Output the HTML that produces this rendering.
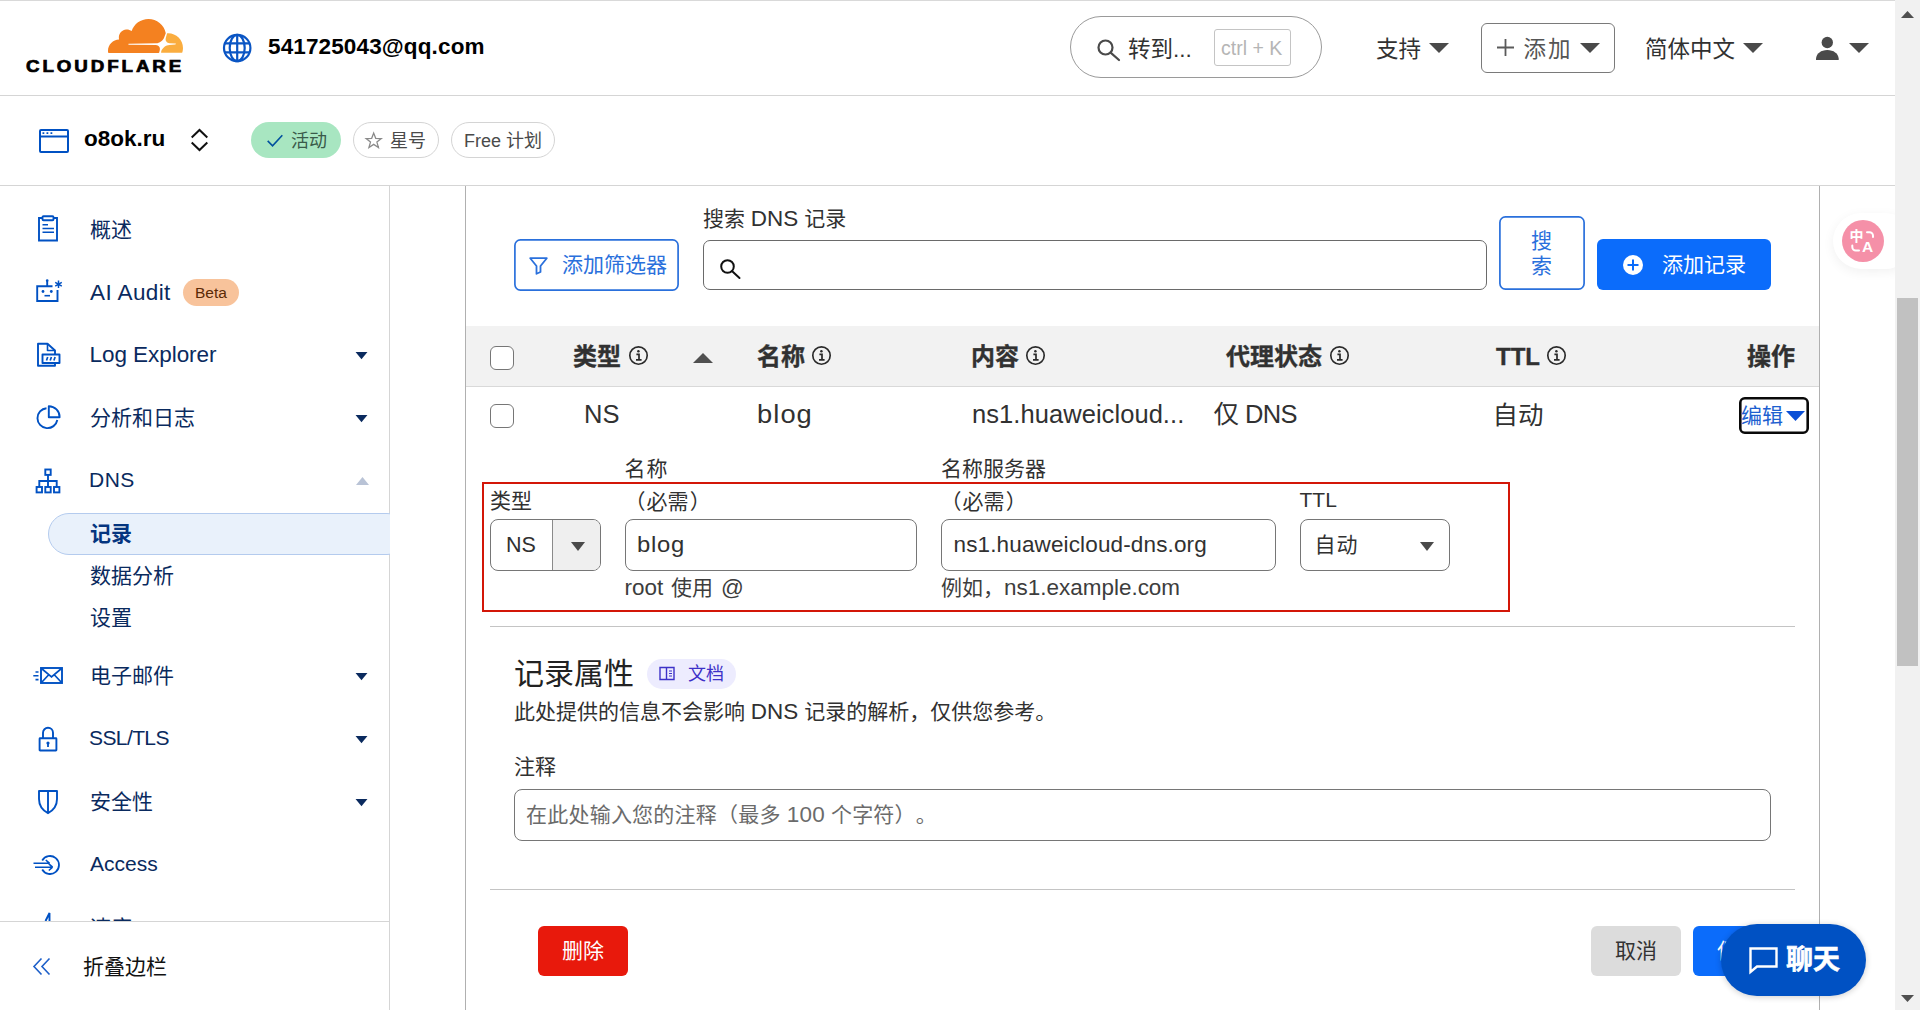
<!DOCTYPE html>
<html lang="zh-CN">
<head>
<meta charset="utf-8">
<title>o8ok.ru | DNS | Cloudflare</title>
<style>
*{box-sizing:border-box;margin:0;padding:0}
html,body{width:1920px;height:1010px;overflow:hidden;background:#fff}
body{position:relative;text-spacing-trim:space-all;font-family:"Liberation Sans","Noto Sans CJK SC",sans-serif;color:#313131;font-size:21px}
.a{position:absolute;white-space:nowrap}
.t{position:absolute;white-space:nowrap;line-height:30px;height:30px}
.b{font-weight:bold}
svg{position:absolute;overflow:visible}
/* header */
#topline{left:0;top:0;width:1895px;height:1px;background:#d9d9d9}
#hdrline{left:0;top:95px;width:1895px;height:1px;background:#d5d5d5}
#zoneline{left:0;top:185px;width:1895px;height:1px;background:#d5d5d5}
#sideline{left:389px;top:186px;width:1px;height:824px;background:#d5d5d5}
#footline{left:0;top:921px;width:389px;height:1px;background:#d5d5d5}
#cardL{left:465px;top:186px;width:1px;height:824px;background:#b0b0b0}
#cardR{left:1819px;top:186px;width:1px;height:824px;background:#b0b0b0}
/* scrollbar */
#sb{left:1895px;top:0;width:25px;height:1010px;background:#f1f1f1}
#sbthumb{left:1897px;top:298px;width:21px;height:368px;background:#c1c1c1}
.nav{color:#0a2a5e;font-size:21px}
.sub{color:#0a2a5e;font-size:21px}
.sub.b{color:#04357f}
.pill{position:absolute;border-radius:18px;height:36px;top:122px}
.inp{position:absolute;border:1px solid #767676;border-radius:8px;background:#fff}
.L{font-size:1.07em}
.row{font-size:25.500px;color:#313131}
.hd{font-weight:bold;font-size:24px;color:#313131;-webkit-text-stroke:0.350px #313131}
</style>
</head>
<body>
<!-- HEADER -->
<div class="a" id="topline"></div>
<div class="a" id="hdrline"></div>
<div class="a" id="zoneline"></div>
<div class="a" id="sideline"></div>
<div class="a" id="cardL"></div>
<div class="a" id="cardR"></div>
<svg style="left:108px;top:18.500px" width="75" height="34" viewBox="54.9 3.6 48.2 21.8" preserveAspectRatio="none">
<path fill="#f48120" d="M88.1 24c.3-1 .2-2-.3-2.600-.5-.600-1.200-1-2.100-1.100l-17.400-.2c-.1 0-.2-.1-.3-.1-.1-.1-.1-.2 0-.3.1-.2.200-.3.400-.3l17.500-.2c2.100-.1 4.300-1.800 5.100-3.800l1-2.600c0-.1.100-.2 0-.3-1.100-5.100-5.700-8.900-11.100-8.900-5 0-9.300 3.200-10.800 7.700-1-.7-2.200-1.100-3.600-1-2.400.2-4.300 2.200-4.600 4.600-.1.600 0 1.200.1 1.800-3.900.1-7.100 3.300-7.100 7.300 0 .4 0 .7.100 1.100 0 .2.200.3.300.3h32.100c.2 0 .4-.1.400-.3l.3-1.100z"/>
<path fill="#faad3f" d="M93.600 12.800h-.5c-.1 0-.2.100-.3.200l-.7 2.400c-.3 1-.2 2 .3 2.600.5.600 1.200 1 2.100 1.100l3.700.2c.1 0 .2.100.3.100.1.100.1.200 0 .3-.1.200-.2.300-.4.300l-3.800.2c-2.100.1-4.300 1.800-5.100 3.800l-.2.900c-.1.100 0 .3.200.3h13.200c.2 0 .3-.1.300-.3.200-.8.400-1.700.4-2.600 0-5.200-4.300-9.500-9.500-9.500"/>
</svg>
<div class="t b" id="wordmark" style="left:25.500px;top:51.500px;font-size:16px;color:#000;letter-spacing:2.500px;transform-origin:0 50%;transform:scaleX(1.17);-webkit-text-stroke:0.700px #000">CLOUDFLARE</div>

<svg style="left:222px;top:33.300px" width="30" height="30" viewBox="0 0 30 30" fill="none" stroke="#0a55c4" stroke-width="2.200">
<circle cx="15.200" cy="15" r="13.200"/><ellipse cx="15.200" cy="15" rx="7.500" ry="13.200"/><path d="M15.200 1.600V28.400M2.800 10.400H27.600M2.800 19.400H27.600"/></svg>
<div class="t b" id="email" style="left:268px;top:32px;font-size:22.500px;color:#000;letter-spacing:0.130px">541725043@qq.com</div>
<div class="a" id="gopill" style="left:1070px;top:16px;width:252px;height:62px;border:1px solid #9a9a9a;border-radius:31px"></div>
<svg style="left:1097px;top:39px" width="24" height="22" viewBox="0 0 24 22" fill="none" stroke="#4a4a4a" stroke-width="2.200" stroke-linecap="round"><circle cx="8.500" cy="8.500" r="7"/><path d="M13.600 13.600L22 21"/></svg>
<div class="t" id="goto" style="left:1128px;top:34.500px;font-size:22.500px;color:#313131">转到...</div>
<div class="a" id="kbd" style="left:1214px;top:29px;width:77px;height:37px;border:1px solid #c4c4c4;border-radius:3px"></div>
<div class="t" id="kbdt" style="left:1221px;top:33px;font-size:19.500px;color:#b5b5b5">ctrl + K</div>
<div class="t" id="support" style="left:1376px;top:34.500px;font-size:22.500px;color:#313131">支持</div>
<svg class="car" style="left:1429px;top:43px" width="20" height="10" viewBox="0 0 20 10"><path d="M0 0H20L10 10Z" fill="#4a4a4a"/></svg>
<div class="a" id="addbtn" style="left:1481px;top:23px;width:134px;height:50px;border:1px solid #7a7a7a;border-radius:6px"></div>
<svg style="left:1497px;top:39px" width="17" height="17" viewBox="0 0 17 17" stroke="#5a5a5a" stroke-width="1.800"><path d="M8.500 0V17M0 8.500H17"/></svg>
<div class="t" id="addt" style="left:1523.500px;top:34.500px;font-size:22.500px;color:#555;letter-spacing:2px">添加</div>
<svg class="car" style="left:1580px;top:43px" width="20" height="10" viewBox="0 0 20 10"><path d="M0 0H20L10 10Z" fill="#4a4a4a"/></svg>
<div class="t" id="lang" style="left:1645px;top:34.500px;font-size:22.500px;color:#313131">简体中文</div>
<svg class="car" style="left:1743px;top:43px" width="20" height="10" viewBox="0 0 20 10"><path d="M0 0H20L10 10Z" fill="#4a4a4a"/></svg>
<svg style="left:1815px;top:36px" width="24" height="24" viewBox="0 0 24 24" fill="#4a4a4a"><circle cx="12.300" cy="6.500" r="5.700"/><path d="M1 24V22.500C1.500 17.500 6 14 12.300 14S23.200 17.500 23.700 22.500V24Z"/></svg>
<svg class="car" style="left:1849px;top:43px" width="20" height="10" viewBox="0 0 20 10"><path d="M0 0H20L10 10Z" fill="#4a4a4a"/></svg>

<svg style="left:39px;top:129px" width="30" height="24" viewBox="0 0 30 24" fill="none" stroke="#0051c3" stroke-width="2"><rect x="1" y="1" width="28" height="22" rx="1"/><path d="M1 7.500H29"/><path d="M3.500 4.200H5.300M7.500 4.200H9.300M11.500 4.200H13.300" stroke-width="1.800"/></svg>
<div class="t b" id="zone" style="left:84px;top:124px;font-size:22.500px;color:#000">o8ok.ru</div>
<svg style="left:191px;top:129px" width="17" height="22" viewBox="0 0 17 22" fill="none" stroke="#111" stroke-width="2"><path d="M0.700 8.500L8.500 1L16.300 8.500M0.700 13.500L8.500 21L16.300 13.500"/></svg>
<div class="pill" style="left:251px;width:90px;background:#a8e6c1"></div>
<svg style="left:266px;top:134px" width="18" height="13" viewBox="0 0 20 16" fill="none" stroke="#00509e" stroke-width="2"><path d="M1 8.500L7 14.500L19 1.500"/></svg>
<div class="t" id="act" style="left:291px;top:126px;font-size:18px;color:#3a5a4a">活动</div>
<div class="pill" style="left:353px;width:86px;border:1px solid #d4d4d4"></div>
<svg style="left:364.800px;top:132.300px" width="17.400" height="16.500" viewBox="0 0 19 18" fill="none" stroke="#8a8a8a" stroke-width="1.400" stroke-linejoin="miter"><path d="M9.500 1.200L11.700 6.900L17.800 7.200L13 11L14.700 16.900L9.500 13.500L4.300 16.900L6 11L1.200 7.200L7.300 6.900Z"/></svg>
<div class="t" id="star" style="left:390px;top:126px;font-size:18px;color:#4a4a4a">星号</div>
<div class="pill" style="left:451px;width:104px;border:1px solid #d4d4d4"></div>
<div class="t" id="free" style="left:464px;top:126px;font-size:18px;color:#4a4a4a">Free 计划</div>

<div class="a" id="selpill" style="left:48px;top:513px;width:360px;height:42px;border:1px solid #b4cbee;border-radius:21px;background:#e9f1fb;clip-path:inset(0 18px 0 0)"></div>
<!-- icons -->
<svg style="left:37px;top:215px" width="22" height="27" viewBox="0 0 22 27" fill="none" stroke="#0051c3" stroke-width="1.900"><path d="M5.500 3H2V25.500H20V3H16.500"/><rect x="5.500" y="1.200" width="11" height="4" rx="1"/><path d="M5.500 9.700H11M5.500 13.500H17M5.500 17.300H17" stroke-width="1.600"/></svg>
<svg style="left:35px;top:278px" width="30" height="25" viewBox="0 0 30 25" fill="none" stroke="#0051c3" stroke-width="1.900"><path d="M17.500 8.200H2.200V23H22.500V12"/><path d="M12.200 8.200V3"/><circle cx="12.200" cy="2.600" r="1.300" fill="#0051c3" stroke="none"/><circle cx="8" cy="13.500" r="1.400" fill="#0051c3" stroke="none"/><circle cx="16.300" cy="13.500" r="1.400" fill="#0051c3" stroke="none"/><path d="M9.500 17.700H15" stroke-width="1.600"/><path d="M23.500 2.500V10M20.200 4.400L26.800 8.100M26.800 4.400L20.200 8.100" stroke-width="1.500"/></svg>
<svg style="left:36px;top:342px" width="26" height="26" viewBox="0 0 26 26" fill="none" stroke="#0051c3" stroke-width="1.900" stroke-linejoin="round"><path d="M19 12V8.500L11.500 1.800H2V23.700H19V21.500"/><path d="M11.500 1.800V8.500H19" stroke-width="1.600"/><rect x="6.500" y="12.500" width="17" height="8.500"/><path d="M10.500 18.500L11.700 15M14.200 18.500L15.400 15M17.900 18.500L19.100 15" stroke-width="1.700"/></svg>
<svg style="left:36px;top:405px" width="26" height="26" viewBox="0 0 26 26" fill="none" stroke="#0051c3" stroke-width="1.900"><path d="M10.500 3.200A10 10 0 1 0 21.300 15"/><path d="M12.800 1.200V12.200H23.600A10.800 10.800 0 0 0 12.800 1.200Z" stroke-linejoin="round"/></svg>
<svg style="left:35px;top:468px" width="26" height="26" viewBox="0 0 26 26" fill="none" stroke="#0051c3" stroke-width="1.900"><rect x="10.300" y="1.500" width="5.400" height="5.400"/><rect x="1.600" y="19" width="5.400" height="5.400"/><rect x="10.300" y="19" width="5.400" height="5.400"/><rect x="19" y="19" width="5.400" height="5.400"/><path d="M13 7V19M4.300 19V13H21.700V19"/></svg>
<svg style="left:32px;top:666px" width="32" height="19" viewBox="0 0 32 19" fill="none" stroke="#0051c3" stroke-width="1.900"><rect x="9" y="2" width="21" height="15"/><path d="M9.500 2.500L19.500 11L29.500 2.500M9.500 16.500L16.500 9M29.500 16.500L22.500 9" stroke-width="1.700"/><path d="M3.500 6H6.500M1.300 9.800H6.500M3.500 13.600H6.500" stroke-width="1.600"/></svg>
<svg style="left:38px;top:726px" width="20" height="26" viewBox="0 0 20 26" fill="none" stroke="#0051c3" stroke-width="1.900"><rect x="1.600" y="12.300" width="16.800" height="12.200" rx="0.500"/><path d="M5 12.300V6.800A5 5 0 0 1 15 6.800V12.300"/><circle cx="10" cy="17" r="1.600" fill="#0051c3" stroke="none"/><path d="M10 17V21" stroke-width="1.800"/></svg>
<svg style="left:37px;top:789px" width="22" height="26" viewBox="0 0 22 26" fill="none" stroke="#0051c3" stroke-width="1.900" stroke-linejoin="round"><path d="M2 2H20V10C20 17 16 21.500 11 24.200C6 21.500 2 17 2 10Z"/><path d="M11 2V24"/></svg>
<svg style="left:32px;top:854px" width="30" height="22" viewBox="0 0 30 22" fill="none" stroke="#0051c3" stroke-width="1.800"><path d="M10.200 6.500A9 9 0 1 1 10.200 15.500"/><path d="M1.500 9.300H17.500M13.800 6L17.600 9.300M3 13.200H20.500M16.800 16.500L20.600 13.200M16.800 9.900L20.600 13.200" stroke-width="1.600"/></svg>
<svg style="left:44px;top:912px" width="10" height="9" viewBox="0 0 10 9" fill="none" stroke="#0051c3" stroke-width="1.900"><path d="M1.500 9L5.500 1V9"/></svg>
<!-- labels -->
<div class="t nav" id="n1" style="left:90px;top:215px">概述</div>
<div class="t nav" id="n2" style="left:90px;top:277.500px;font-size:22.500px;letter-spacing:0.400px">AI Audit</div>
<div class="a" style="left:183px;top:279px;width:56px;height:27px;border-radius:14px;background:#f8c39b"></div>
<div class="t" id="beta" style="left:195px;top:278px;font-size:15.500px;color:#5b2a06">Beta</div>
<div class="t nav" id="n3" style="left:89.500px;top:340px;font-size:22.500px;letter-spacing:-0.050px">Log Explorer</div>
<div class="t nav" id="n4" style="left:90px;top:403px">分析和日志</div>
<div class="t nav" id="n5" style="left:89px;top:465px;font-size:21px;letter-spacing:0.500px">DNS</div>
<div class="t sub b" id="s1" style="left:90px;top:519px">记录</div>
<div class="t sub" id="s2" style="left:90px;top:561px">数据分析</div>
<div class="t sub" id="s3" style="left:90px;top:603px">设置</div>
<div class="t nav" id="n6" style="left:90px;top:661px">电子邮件</div>
<div class="t nav" id="n7" style="left:89px;top:723px;letter-spacing:-0.600px">SSL/TLS</div>
<div class="t nav" id="n8" style="left:90px;top:787px">安全性</div>
<div class="t nav" id="n9" style="left:90px;top:849px">Access</div>
<div class="a" style="left:0;top:900px;width:389px;height:21px;overflow:hidden"><div class="t nav" id="n10" style="left:90px;top:13px">速度</div></div>
<svg style="left:355.300px;top:352px" width="13" height="7.300" viewBox="0 0 13 8"><path d="M0 0H13L6.500 8Z" fill="#0a2a5e"/></svg>
<svg style="left:355.300px;top:415px" width="13" height="7.300" viewBox="0 0 13 8"><path d="M0 0H13L6.500 8Z" fill="#0a2a5e"/></svg>
<svg style="left:356px;top:477px" width="13" height="8" viewBox="0 0 13 8"><path d="M0 8H13L6.500 0Z" fill="#b9c3d6"/></svg>
<svg style="left:355.300px;top:673px" width="13" height="7.300" viewBox="0 0 13 8"><path d="M0 0H13L6.500 8Z" fill="#0a2a5e"/></svg>
<svg style="left:355.300px;top:736px" width="13" height="7.300" viewBox="0 0 13 8"><path d="M0 0H13L6.500 8Z" fill="#0a2a5e"/></svg>
<svg style="left:355.300px;top:799px" width="13" height="7.300" viewBox="0 0 13 8"><path d="M0 0H13L6.500 8Z" fill="#0a2a5e"/></svg>
<div class="a" id="footline"></div>
<svg style="left:33px;top:958px" width="17" height="17" viewBox="0 0 17 17" fill="none" stroke="#1d5fc9" stroke-width="1.600"><path d="M8.500 0.500L1 8.500L8.500 16.500M16.500 0.500L9 8.500L16.500 16.500"/></svg>
<div class="t" id="fold" style="left:83px;top:952px;color:#111">折叠边栏</div>

<!-- toolbar -->
<svg style="left:514px;top:239px" width="165" height="52"><rect x="0.900" y="0.900" width="163.200" height="50.200" rx="5.500" fill="#fff" stroke="#2a70dc" stroke-width="1.700"/></svg>
<svg style="left:529px;top:257px" width="19" height="18" viewBox="0 0 19 18" fill="none" stroke="#2a70dc" stroke-width="1.800" stroke-linejoin="round"><path d="M1.200 1.200H17.800L11.500 9V15L7.500 16.800V9Z"/></svg>
<div class="t" id="flt" style="left:562px;top:250px;color:#2a70dc">添加筛选器</div>
<div class="t" id="slab" style="left:703px;top:204px">搜索 <span class="L">DNS</span> 记录</div>
<div class="inp" style="left:703px;top:240px;width:784px;height:50px;border-radius:7px;border-color:#6a6a6a"></div>
<svg style="left:720px;top:259px" width="21" height="20" viewBox="0 0 21 20" fill="none" stroke="#111" stroke-width="2" stroke-linecap="round"><circle cx="7.500" cy="7.500" r="6.300"/><path d="M12.200 12.200L19.500 19"/></svg>
<svg style="left:1499px;top:216px" width="86" height="74"><rect x="0.900" y="0.900" width="84.200" height="72.200" rx="5.500" fill="#fff" stroke="#2a70dc" stroke-width="1.700"/></svg>
<div class="t" id="sbtn1" style="left:1531px;top:226px;color:#2a70dc">搜</div>
<div class="t" id="sbtn2" style="left:1531px;top:251px;color:#2a70dc">索</div>
<div class="a" style="left:1597px;top:239px;width:174px;height:51px;border-radius:6px;background:#0b6cfb"></div>
<svg style="left:1623px;top:255px" width="20" height="20" viewBox="0 0 20 20"><circle cx="10" cy="10" r="10" fill="#fff"/><path d="M10 4.500V15.500M4.500 10H15.500" stroke="#0b6cfb" stroke-width="2"/></svg>
<div class="t" id="addrec" style="left:1662px;top:250px;color:#fff">添加记录</div>
<!-- table header -->
<div class="a" style="left:466px;top:326px;width:1353px;height:60px;background:#f2f2f2"></div>
<div class="a" style="left:466px;top:386px;width:1353px;height:1px;background:#d9d9d9"></div>
<div class="a" style="left:490px;top:346px;width:24px;height:24px;border:1px solid #767676;border-radius:6px;background:#fff"></div>
<div class="t hd" id="h1" style="left:573px;top:342px">类型</div><svg style="left:628.7px;top:346.300px" width="19" height="19" viewBox="0 0 19 19" fill="none" stroke="#2a2a2a" stroke-width="1.650"><circle cx="9.500" cy="9.500" r="8.700"/><path d="M7.400 8.300H10V13.600M7 13.800H12.600" stroke-width="1.700"/><circle cx="9.400" cy="5.200" r="1.250" fill="#2a2a2a" stroke="none"/></svg>
<svg style="left:693px;top:353px" width="20" height="10" viewBox="0 0 20 10"><path d="M0 10H20L10 0Z" fill="#505050"/></svg>
<div class="t hd" id="h2" style="left:757px;top:342px">名称</div><svg style="left:812.2px;top:346.300px" width="19" height="19" viewBox="0 0 19 19" fill="none" stroke="#2a2a2a" stroke-width="1.650"><circle cx="9.500" cy="9.500" r="8.700"/><path d="M7.400 8.300H10V13.600M7 13.800H12.600" stroke-width="1.700"/><circle cx="9.400" cy="5.200" r="1.250" fill="#2a2a2a" stroke="none"/></svg>
<div class="t hd" id="h3" style="left:971px;top:342px">内容</div><svg style="left:1026.2px;top:346.300px" width="19" height="19" viewBox="0 0 19 19" fill="none" stroke="#2a2a2a" stroke-width="1.650"><circle cx="9.500" cy="9.500" r="8.700"/><path d="M7.400 8.300H10V13.600M7 13.800H12.600" stroke-width="1.700"/><circle cx="9.400" cy="5.200" r="1.250" fill="#2a2a2a" stroke="none"/></svg>
<div class="t hd" id="h4" style="left:1226px;top:342px">代理状态</div><svg style="left:1329.7px;top:346.300px" width="19" height="19" viewBox="0 0 19 19" fill="none" stroke="#2a2a2a" stroke-width="1.650"><circle cx="9.500" cy="9.500" r="8.700"/><path d="M7.400 8.300H10V13.600M7 13.800H12.600" stroke-width="1.700"/><circle cx="9.400" cy="5.200" r="1.250" fill="#2a2a2a" stroke="none"/></svg>
<div class="t hd" id="h5" style="left:1496px;top:342px">TTL</div><svg style="left:1546.7px;top:346.300px" width="19" height="19" viewBox="0 0 19 19" fill="none" stroke="#2a2a2a" stroke-width="1.650"><circle cx="9.500" cy="9.500" r="8.700"/><path d="M7.400 8.300H10V13.600M7 13.800H12.600" stroke-width="1.700"/><circle cx="9.400" cy="5.200" r="1.250" fill="#2a2a2a" stroke="none"/></svg>
<div class="t hd" id="h6" style="left:1747px;top:342px">操作</div>
<!-- row -->
<div class="a" style="left:490px;top:404px;width:24px;height:24px;border:1px solid #767676;border-radius:6px;background:#fff"></div>
<div class="t row" id="r1" style="left:584px;top:399px">NS</div>
<div class="t row" id="r2" style="left:757px;top:399px;letter-spacing:1px;transform:scaleX(1.07);transform-origin:0 50%">blog</div>
<div class="t row" id="r3" style="left:972px;top:399px;letter-spacing:0.060px">ns1.huaweicloud...</div>
<div class="t row" id="r4" style="left:1213.500px;top:399px;letter-spacing:-0.600px">仅 <span>DNS</span></div>
<div class="t row" id="r5" style="left:1492.500px;top:399.500px">自动</div>
<svg style="left:1739px;top:397px" width="70" height="37"><rect x="1.300" y="1.300" width="67.400" height="34.400" rx="4.500" fill="none" stroke="#0a0a0a" stroke-width="2.600"/></svg>
<div class="t" id="edit" style="left:1741px;top:401px;color:#1d5fd0;font-size:21px">编辑</div>
<svg style="left:1785.500px;top:411px" width="19" height="10" viewBox="0 0 19 10"><path d="M0 0H19L9.500 10Z" fill="#0a4fd6"/></svg>
<!-- form -->
<div class="t" id="f1" style="left:624.500px;top:454px;letter-spacing:1px">名称</div>
<div class="t" id="f2" style="left:941px;top:454px">名称服务器</div>
<div class="a" style="left:482px;top:482px;width:1028px;height:130px;border:2px solid #d31608"></div>
<div class="t" id="f3" style="left:490px;top:486px">类型</div>
<div class="t" id="f4" style="left:624.500px;top:487px">（<span style="margin:0 1.300px 0 1px">必需</span>）</div>
<div class="t" id="f5" style="left:940.500px;top:487px">（<span style="margin:0 1.300px 0 1px">必需</span>）</div>
<div class="t" id="f6" style="left:1299.500px;top:485px">TTL</div>
<div class="inp" style="left:490px;top:519px;width:111px;height:52px;overflow:hidden"><div style="position:absolute;left:61px;top:0;width:49px;height:50px;background:#efefef;border-left:1px solid #8a8a8a"></div></div>
<div class="t" id="v1" style="left:506px;top:530px;font-size:21.500px">NS</div>
<svg style="left:571px;top:542px" width="14" height="9" viewBox="0 0 14 9"><path d="M0 0H14L7 9Z" fill="#4a4a4a"/></svg>
<div class="inp" style="left:625px;top:519px;width:292px;height:52px"></div>
<div class="t" id="v2" style="left:637px;top:530px;font-size:22.500px;letter-spacing:0.700px;transform:scaleX(1.06);transform-origin:0 50%">blog</div>
<div class="inp" style="left:941px;top:519px;width:335px;height:52px"></div>
<div class="t" id="v3" style="left:953.500px;top:530px;font-size:22.500px;letter-spacing:0.140px">ns1.huaweicloud-dns.org</div>
<div class="inp" style="left:1300px;top:519px;width:150px;height:52px"></div>
<div class="t" id="v4" style="left:1314.500px;top:530px;letter-spacing:1px">自动</div>
<svg style="left:1420px;top:542px" width="14" height="9" viewBox="0 0 14 9"><path d="M0 0H14L7 9Z" fill="#4a4a4a"/></svg>
<div class="t" id="f7" style="left:624.500px;top:573px;color:#3d3d3d;word-spacing:2px"><span class="L">root</span> 使用 <span class="L">@</span></div>
<div class="t" id="f8" style="left:941px;top:573px;color:#3d3d3d">例如，<span class="L">ns1.example.com</span></div>
<div class="a" style="left:490px;top:626px;width:1305px;height:1px;background:#c4c4c4"></div>
<!-- attrs -->
<div class="t" id="a1" style="left:514px;top:654px;font-size:30px;line-height:40px;height:40px;color:#222">记录属性</div>
<div class="a" style="left:647px;top:659px;width:89px;height:30px;border-radius:15px;background:#edecfe"></div>
<svg style="left:659px;top:666px" width="16" height="15" viewBox="0 0 16 15" fill="none" stroke="#3d31c8" stroke-width="1.400"><path d="M1 1.500H7.500V13.500H1ZM7.500 1.500H15V13.500H7.500"/><path d="M10 5H13M10 7.500H13M10 10H13" stroke-width="1.100"/></svg>
<div class="t" id="a2" style="left:688px;top:659px;font-size:18px;color:#3d31c8">文档</div>
<div class="t" id="a3" style="left:514px;top:697px">此处提供的信息不会影响 <span class="L">DNS</span> 记录的解析，仅供您参考。</div>
<div class="t" id="a4" style="left:514px;top:752px">注释</div>
<div class="inp" style="left:514px;top:789px;width:1257px;height:52px"></div>
<div class="t" id="a5" style="left:526px;top:800px;color:#6b6b6b;letter-spacing:0.220px">在此处输入您的注释（最多 <span class="L">100</span> 个字符）。</div>
<div class="a" style="left:490px;top:889px;width:1305px;height:1px;background:#c4c4c4"></div>
<div class="a" style="left:538px;top:926px;width:90px;height:50px;border-radius:6px;background:#e8190c"></div>
<div class="t" id="del" style="left:562px;top:936px;color:#fff">删除</div>
<div class="a" style="left:1591px;top:926px;width:90px;height:50px;border-radius:6px;background:#dcdcdc"></div>
<div class="t" id="cancel" style="left:1615px;top:936px;color:#333">取消</div>
<div class="a" style="left:1693px;top:926px;width:90px;height:50px;border-radius:6px;background:#0b6cfb"></div>
<div class="t" id="save" style="left:1717px;top:936px;color:#fff">保存</div>

<div class="a" style="left:1833px;top:213px;width:80px;height:56px;border-radius:28px;background:#fff;box-shadow:0 3px 12px rgba(0,0,0,0.06);clip-path:inset(-20px 18px -20px -20px)"></div>
<div class="a" style="left:1841.500px;top:220px;width:42px;height:42px;border-radius:50%;background:#f590a8"></div>
<div class="t b" id="tr1" style="left:1849.500px;top:226px;font-size:14px;line-height:20px;height:20px;color:#fff">中</div>
<div class="t b" id="tr2" style="left:1862px;top:236.500px;font-size:15.500px;line-height:20px;height:20px;color:#fff">A</div>
<svg style="left:1841px;top:220px" width="43" height="43" viewBox="0 0 43 43" fill="none" stroke="#fff" stroke-width="2" stroke-linecap="round"><path d="M26 12.200H28.500A3.500 3.500 0 0 1 32 15.700V17"/><path d="M11.300 25.500V27A3.500 3.500 0 0 0 14.800 30.500H18"/></svg>
<div class="a" style="left:1721px;top:924px;width:145px;height:72px;border-radius:36px;background:#0051c3;box-shadow:0 1px 6px rgba(0,0,0,0.2)"></div>
<svg style="left:1749px;top:947px" width="29" height="27" viewBox="0 0 29 27" fill="none" stroke="#fff" stroke-width="2.400" stroke-linejoin="miter"><path d="M1.500 1.500H27.500V19.500H8L1.500 25Z"/></svg>
<div class="t b" id="chat" style="left:1786px;top:942px;font-size:27px;line-height:36px;height:36px;color:#fff;-webkit-text-stroke:0.600px #fff">聊天</div>

<div class="a" id="sb"></div>
<div class="a" id="sbthumb"></div>
<svg style="left:1901px;top:11px" width="13" height="7" viewBox="0 0 13 7"><path d="M0 7 L6.5 0 L13 7Z" fill="#505050"/></svg>
<svg style="left:1901px;top:995px" width="13" height="7" viewBox="0 0 13 7"><path d="M0 0 L6.5 7 L13 0Z" fill="#505050"/></svg>
</body>
</html>
